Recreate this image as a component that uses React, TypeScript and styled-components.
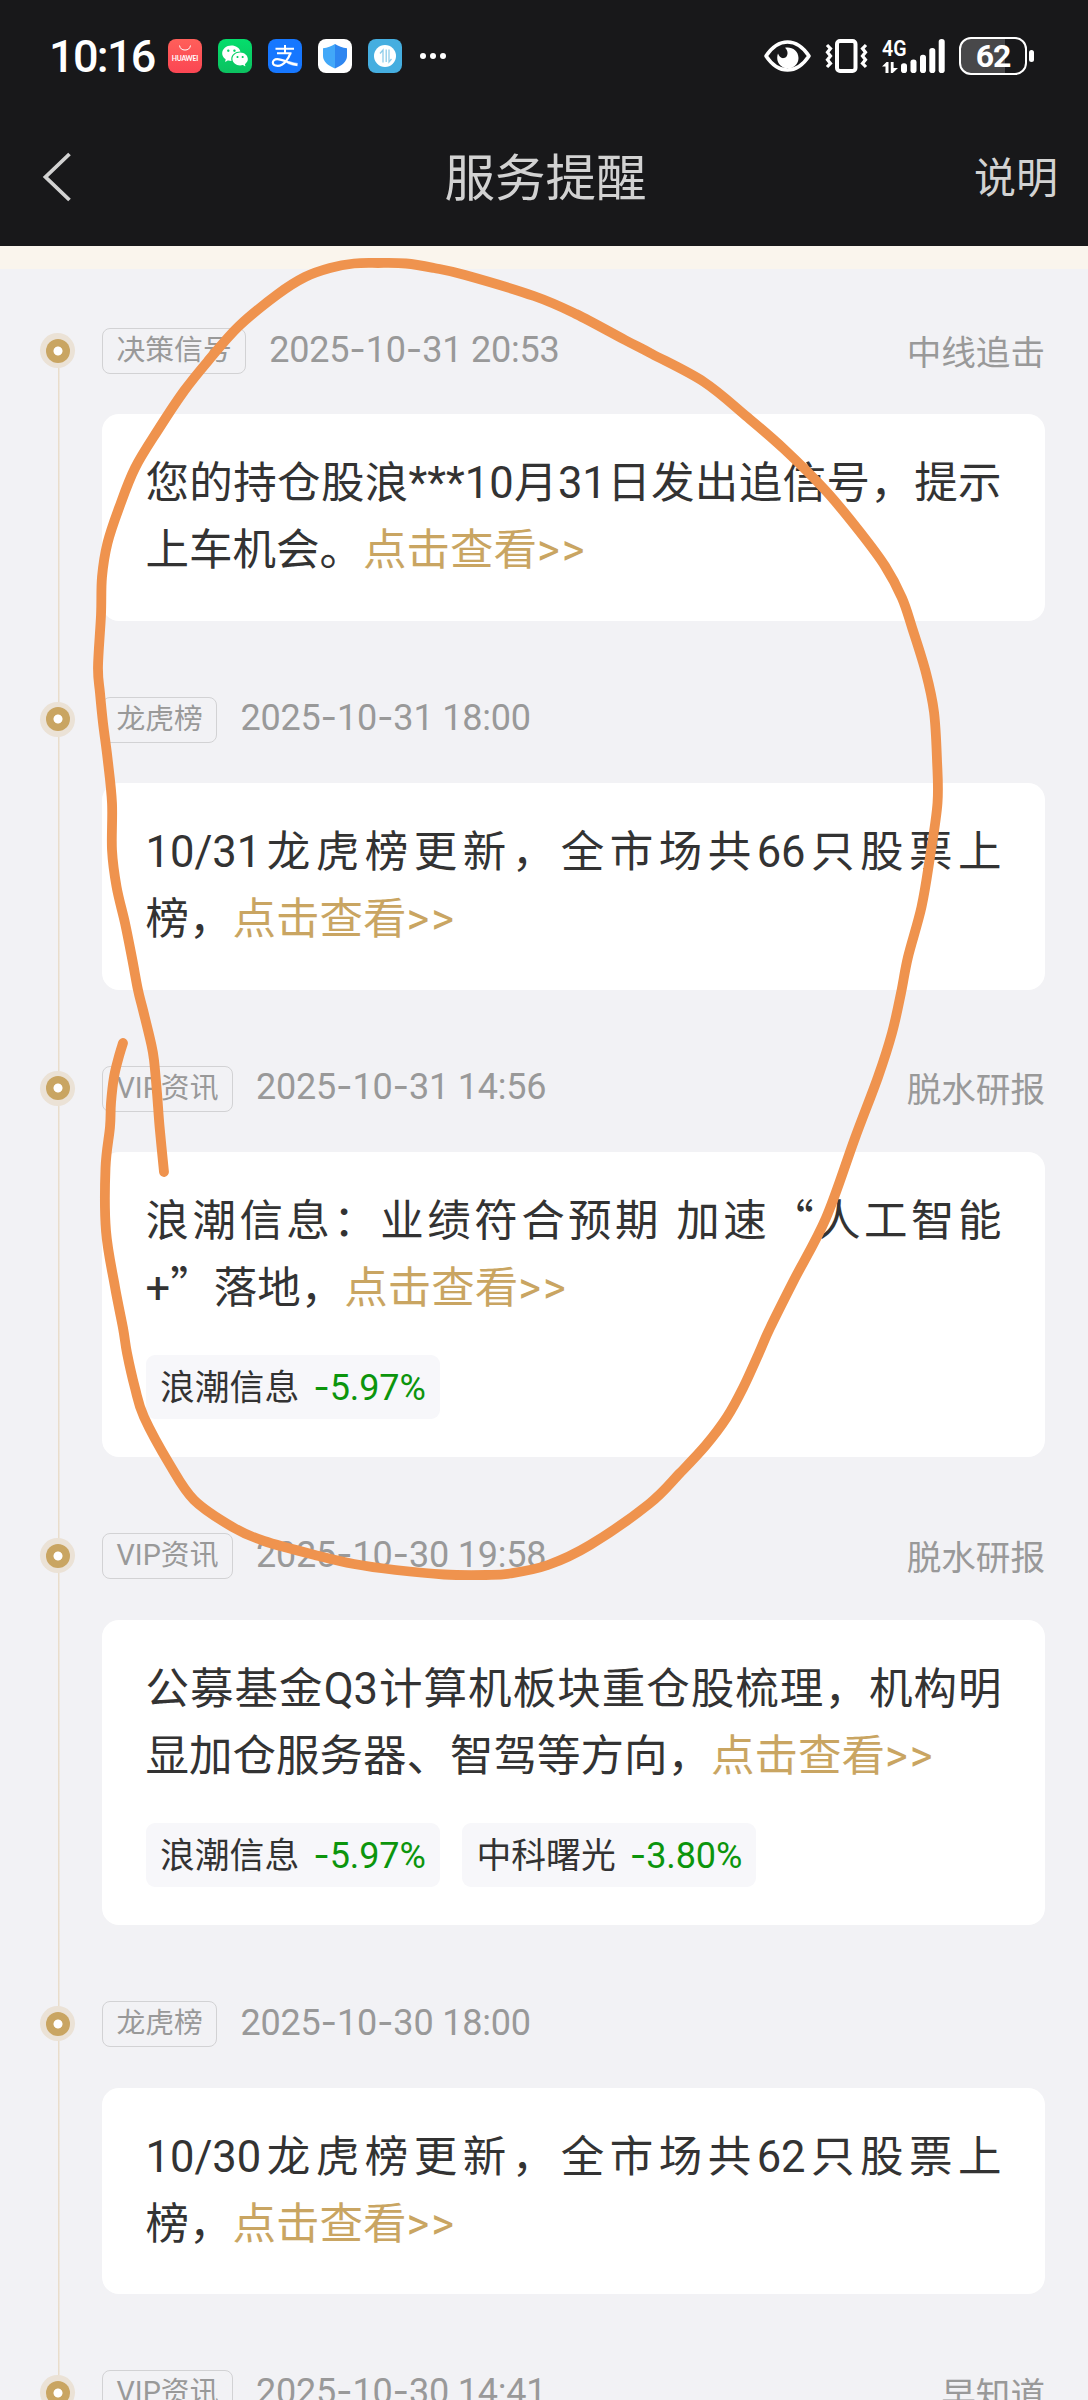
import React from "react";
import styled, { createGlobalStyle } from "styled-components";
import { RiWechatFill } from "react-icons/ri";

const LATIN = `Roboto, "Noto Sans CJK SC", sans-serif`;
const CJK = `"Noto Sans CJK SC", sans-serif`;

const GlobalStyle = createGlobalStyle`
  html, body { margin: 0; padding: 0; background: #f2f2f5; }
  *, *::before, *::after { box-sizing: border-box; }
`;

const Screen = styled.div`
  position: relative;
  width: 1088px;
  height: 2400px;
  overflow: hidden;
  background: #f2f2f5;
  font-family: ${LATIN};
  text-spacing-trim: space-all;
  text-autospace: no-autospace;
`;

const Top = styled.header`
  height: 246px;
  background: #18181a;
  color: #fff;
`;

const StatusBar = styled.div`
  display: flex;
  align-items: center;
  height: 112px;
  padding: 0 54px 0 49px;
`;

const Clock = styled.div`
  width: 119px;
  font-size: 45px;
  font-weight: 500;
  line-height: 52px;
  letter-spacing: -1.7px;
  white-space: nowrap;
  padding-top: 2px;
`;

const Apps = styled.div`
  display: flex;
  align-items: center;
  gap: 16px;
`;

const AppTile = styled.div<{ $bg: string }>`
  display: flex;
  align-items: center;
  justify-content: center;
  width: 34px;
  height: 34px;
  border-radius: 8px;
  background: ${(p) => p.$bg};
  color: #fff;
`;

const MoreDots = styled.div`
  display: flex;
  gap: 4px;
  margin-left: 18px;

  i {
    width: 6px;
    height: 6px;
    border-radius: 50%;
    background: #fff;
  }
`;

const Indicators = styled.div`
  display: flex;
  align-items: center;
  gap: 14px;
  margin-left: auto;

  svg {
    overflow: visible;
  }
`;

const Battery = styled.div`
  display: flex;
  align-items: center;
  gap: 2px;
`;

const BatteryBody = styled.div<{ $level: number }>`
  display: flex;
  align-items: center;
  justify-content: center;
  width: 68px;
  height: 38px;
  border: 2.5px solid #fff;
  border-radius: 12px;
  background: linear-gradient(90deg, #48484a ${(p) => p.$level + 6}%, transparent 0);
  font-size: 32px;
  font-weight: 700;
  line-height: 34px;
  letter-spacing: -1px;
`;

const BatteryTip = styled.div`
  width: 5px;
  height: 12px;
  border-radius: 3px;
  background: #fff;
`;

const NavBar = styled.div`
  display: grid;
  grid-template-columns: 1fr auto 1fr;
  align-items: center;
  height: 130px;
  padding: 0 30px 0 42px;
  color: #d2d2d2;
`;

const Title = styled.h1`
  margin: 0 9px 6px 0;
  font: 400 50.5px/74px ${CJK};
`;

const Explain = styled.div`
  justify-self: end;
  margin-bottom: 4px;
  font: 400 42px/62px ${CJK};
`;

const Notice = styled.div`
  height: 23px;
  background: #faf5ed;
`;

const Timeline = styled.main`
  padding: 59px 43px 0 40px;
`;

const Entry = styled.section`
  display: grid;
  grid-template-columns: 36px 1fr;
  column-gap: 26px;
`;

const Rail = styled.div`
  display: flex;
  flex-direction: column;
  align-items: center;
  background: linear-gradient(#e9ddcb, #e9ddcb) 18px 0 / 1.5px 100% no-repeat;
`;

const RailHead = styled.div<{ $first?: boolean }>`
  display: flex;
  align-items: center;
  height: 46px;
  width: 36px;
  background: ${(p) => (p.$first ? "linear-gradient(#f2f2f5 50%, transparent 0)" : "none")};
`;

const Dot = styled.div`
  display: flex;
  align-items: center;
  justify-content: center;
  width: 35px;
  height: 35px;
  margin-top: -1px;
  border-radius: 50%;
  background: #ebe2d6;

  &::after {
    content: "";
    width: 24px;
    height: 24px;
    border-radius: 50%;
    background: radial-gradient(circle, #fff 4.1px, #c9a562 4.9px);
  }
`;

const Content = styled.div`
  padding-bottom: 76px;
`;

const Meta = styled.div`
  display: flex;
  align-items: center;
  height: 46px;
  margin-bottom: 40.4px;
  color: #999;
`;

const Tag = styled.span`
  height: 46px;
  padding: 0 13.5px;
  border: 1px solid #d2d2d4;
  border-radius: 8px;
  font-size: 28.8px;
  line-height: 43px;
  white-space: nowrap;
`;

const Stamp = styled.time`
  margin-left: 23px;
  font-size: 36px;
  line-height: 42px;
  letter-spacing: -0.2px;
  margin-top: -3px;
  white-space: nowrap;
`;

const Source = styled.span`
  margin-left: auto;
  margin-top: 3px;
  font-size: 34.6px;
  line-height: 46px;
`;

const Card = styled.article`
  padding: 37px 43.5px 38.6px;
  border-radius: 17px;
  background: #fff;
`;

const Body = styled.div`
  height: 130.8px;
`;

const Line = styled.div<{ $full?: boolean }>`
  height: 66.9px;
  font-size: 43.5px;
  line-height: 66.9px;
  color: #333;
  white-space: nowrap;
  text-align-last: ${(p) => (p.$full ? "justify" : "left")};
`;

const More = styled.a`
  color: #c9a562;
`;

const Arrows = styled.span`
  letter-spacing: 2px;
`;

const Mark = styled.span`
  font-family: ${CJK};
  line-height: 1;
`;

const Dash = styled.span`
  font-family: Inter, sans-serif;
  line-height: 1;
`;

const Chips = styled.div`
  display: flex;
  gap: 22.5px;
  margin-top: 35.4px;
`;

const Chip = styled.div`
  display: flex;
  align-items: center;
  gap: 14px;
  width: 294px;
  height: 63.7px;
  padding: 2px 14.5px 0;
  border-radius: 9px;
  background: #f7f7fa;
  font-size: 34.8px;
  line-height: 48px;
  color: #333;
  white-space: nowrap;
`;

const Change = styled.span`
  color: #0c950c;
  font-size: 36px;
  letter-spacing: -0.1px;
`;

const Ink = styled.svg`
  position: absolute;
  inset: 0;
  pointer-events: none;
`;

type Stock = { name: string; change: string };
type Reminder = {
  tag: string;
  time: string;
  source?: string;
  first?: string;
  second?: string;
  stocks?: Stock[];
};

const reminders: Reminder[] = [
  {
    tag: "决策信号",
    time: "2025-10-31 20:53",
    source: "中线追击",
    first: "您的持仓股浪***10月31日发出追信号，提示",
    second: "上车机会。",
  },
  {
    tag: "龙虎榜",
    time: "2025-10-31 18:00",
    first: "10/31龙虎榜更新，全市场共66只股票上",
    second: "榜，",
  },
  {
    tag: "VIP资讯",
    time: "2025-10-31 14:56",
    source: "脱水研报",
    first: "浪潮信息：业绩符合预期 加速“人工智能",
    second: "+”落地，",
    stocks: [{ name: "浪潮信息", change: "-5.97%" }],
  },
  {
    tag: "VIP资讯",
    time: "2025-10-30 19:58",
    source: "脱水研报",
    first: "公募基金Q3计算机板块重仓股梳理，机构明",
    second: "显加仓服务器、智驾等方向，",
    stocks: [
      { name: "浪潮信息", change: "-5.97%" },
      { name: "中科曙光", change: "-3.80%" },
    ],
  },
  {
    tag: "龙虎榜",
    time: "2025-10-30 18:00",
    first: "10/30龙虎榜更新，全市场共62只股票上",
    second: "榜，",
  },
  { tag: "VIP资讯", time: "2025-10-30 14:41", source: "早知道" },
];

// Curly quotes take their full-width form, hyphens the wider dash of Inter.
function Mixed({ text }: { text: string }) {
  return (
    <>
      {text.split(/([“”-])/).map((part, i) => {
        if (part === "-") return <Dash key={i}>-</Dash>;
        if (part === "“" || part === "”") return <Mark key={i}>{part}</Mark>;
        return part;
      })}
    </>
  );
}

function Row({ item, first }: { item: Reminder; first: boolean }) {
  return (
    <Entry>
      <Rail>
        <RailHead $first={first}>
          <Dot />
        </RailHead>
      </Rail>
      <Content>
        <Meta>
          <Tag>{item.tag}</Tag>
          <Stamp>
            <Mixed text={item.time} />
          </Stamp>
          {item.source && <Source>{item.source}</Source>}
        </Meta>
        {item.first && (
          <Card>
            <Body>
              <Line $full>
                <Mixed text={item.first} />
              </Line>
              <Line>
                <Mixed text={item.second ?? ""} />
                <More>
                  点击查看<Arrows>&gt;&gt;</Arrows>
                </More>
              </Line>
            </Body>
            {item.stocks && (
              <Chips>
                {item.stocks.map((s) => (
                  <Chip key={s.name}>
                    {s.name}
                    <Change>
                      <Mixed text={s.change} />
                    </Change>
                  </Chip>
                ))}
              </Chips>
            )}
          </Card>
        )}
      </Content>
    </Entry>
  );
}

const stroke: [number, number][] = [
  [164, 1172], [159.6, 1127], [157, 1093], [154, 1060], [151, 1043], [143, 1010], [138, 990],
  [132, 958], [125, 923], [116.6, 887], [112, 850], [112, 803], [107.5, 758], [103, 723],
  [100, 693], [98, 667], [101, 615], [102, 577], [107.5, 543], [119, 508], [135, 468],
  [158, 430], [184, 391], [208, 361], [239, 326], [278, 294], [305, 277], [330, 268],
  [354, 263.5], [378, 263], [406, 263.5], [434, 268], [465, 275], [534, 296], [576, 314],
  [625, 340], [652, 354], [704, 382], [746, 416], [784, 449], [826, 491], [860, 532],
  [885, 566], [902, 598], [912.5, 629], [926, 673], [934, 712], [937, 760], [937.5, 803],
  [930, 857], [921.5, 907], [908, 957], [901, 993], [892, 1033], [878, 1077], [855, 1138],
  [826, 1218], [794, 1280], [770, 1328], [759, 1353], [743, 1388], [727, 1417],
  [706, 1445], [680, 1473], [649, 1504], [590, 1545], [548, 1565], [510, 1573.5],
  [486, 1575], [444, 1574.5], [395.5, 1570], [354, 1564], [319, 1556], [264, 1541],
  [232.5, 1527], [194, 1500], [170, 1465], [144, 1417], [135, 1388], [127, 1353],
  [123, 1328], [115, 1287], [106, 1231], [105.5, 1168], [110, 1127], [111, 1103],
  [114, 1077], [118.5, 1058], [123, 1043],
];

// Catmull-Rom spline through the pen samples.
function smooth(pts: [number, number][]) {
  let d = `M${pts[0][0]} ${pts[0][1]}`;
  for (let i = 0; i < pts.length - 1; i++) {
    const a = pts[Math.max(i - 1, 0)];
    const b = pts[i];
    const c = pts[i + 1];
    const e = pts[Math.min(i + 2, pts.length - 1)];
    d += `C${b[0] + (c[0] - a[0]) / 6} ${b[1] + (c[1] - a[1]) / 6} ${c[0] - (e[0] - b[0]) / 6} ${
      c[1] - (e[1] - b[1]) / 6
    } ${c[0]} ${c[1]}`;
  }
  return d;
}

const bars = [
  [19, 24.2],
  [28.5, 20.5],
  [38, 15.8],
  [47.3, 9],
  [56.7, 0],
];

export default function App() {
  return (
    <Screen lang="zh-CN">
      <GlobalStyle />
      <Top>
        <StatusBar>
          <Clock>10:16</Clock>
          <Apps>
            <AppTile $bg="linear-gradient(#ff5f5a, #fb4653)">
              <svg width="34" height="34" viewBox="0 0 34 34">
                <path d="M11.5 6.5a5.6 5.6 0 0 0 11 0" fill="none" stroke="#fff" strokeWidth="1" />
                <text x="3.8" y="22" textLength="26.4" fontSize="6.8" fontWeight="700" fill="#fff" fontFamily="Lato, sans-serif">
                  HUAWEI
                </text>
              </svg>
            </AppTile>
            <AppTile $bg="linear-gradient(#04de6c, #0cc160)">
              <RiWechatFill size={28} />
            </AppTile>
            <AppTile $bg="#1677ff">
              <svg width="34" height="34" viewBox="0 0 34 34" fill="none" stroke="#fff">
                <path d="M17 6v8M7.5 9.8h18.5M9 14.3h14.5" strokeWidth="2" />
                <path d="M22.3 14.3C20.5 19.5 16 26.8 9.8 26.8c-6.6 0-6.4-6.6-.6-6.6 6.4 0 12.5 5 20 5.6" strokeWidth="2.2" />
                <path d="M20 23.2c3 1.3 6 2.1 9.7 2.4" strokeWidth="3.4" opacity=".6" />
              </svg>
            </AppTile>
            <AppTile $bg="#fff">
              <svg width="34" height="34" viewBox="0 0 34 34">
                <path d="M17 5c3.500 2.400 7.500 3.700 12 4.200v7.800c0 5.500-4.800 9.500-12 12.500z" fill="#2e86f0" />
                <path d="M17 5c-3.500 2.400-7.500 3.700-12 4.200v7.800c0 5.500 4.800 9.500 12 12.500z" fill="#42a8f8" />
              </svg>
            </AppTile>
            <AppTile $bg="#45aee0">
              <svg width="34" height="34" viewBox="0 0 34 34">
                <circle cx="17" cy="17" r="11" fill="#fff" />
                <path d="M12 14.500l3-3.500v12.500M18.200 10.500V23M21 10.500V23l2.500-3" fill="none" stroke="#8fcdea" strokeWidth="1.3" />
              </svg>
            </AppTile>
          </Apps>
          <MoreDots>
            <i />
            <i />
            <i />
          </MoreDots>
          <Indicators>
            <svg width="47" height="34" viewBox="0 0 47 34">
              <path d="M2 17C8 8 15 3 23.500 3S39 8 45 17c-6 9-13 14-21.500 14S8 26 2 17z" fill="none" stroke="#fff" strokeWidth="3.6" strokeLinejoin="round" />
              <path d="M21 8.800c6-1.500 13.500 2.400 13.500 10.200 0 6-5 10.500-10.500 10.500S13.200 25 13.200 19c0-1.800.3-3.200.8-4.500 1 3 3.300 5.300 6 4.600 4.500-1.100 4.600-7.300 1-10.300z" fill="#fff" />
            </svg>
            <svg width="43" height="34" viewBox="0 0 43 34">
              <rect x="12" y="2" width="18.5" height="30" rx="3" fill="none" stroke="#fff" strokeWidth="4" />
              <path d="M2 6l3.500 3.600L2.500 13.300 5.500 17l-3 3.700 3 3.700L2 28M41 6l-3.500 3.600 3 3.700-3 3.700 3 3.700-3 3.700L41 28" fill="none" stroke="#fff" strokeWidth="3.2" />
            </svg>
            <svg width="63" height="34" viewBox="0 0 63 34">
              <text x="0" y="16.8" textLength="24.5" lengthAdjust="spacingAndGlyphs" fontSize="22.5" fontWeight="600" fill="#fff" fontFamily="Roboto, sans-serif">
                4G
              </text>
              <path d="M0 27.500L4.500 23H6.500V34H3.500V27.500zM8.800 23h2.800v6H16l-5.200 5H8.800z" fill="#fff" />
              {bars.map(([x, y]) => (
                <rect key={x} x={x} y={y} width="6" height={34 - y} rx="2.8" fill="#fff" />
              ))}
            </svg>
            <Battery>
              <BatteryBody $level={62}>62</BatteryBody>
              <BatteryTip />
            </Battery>
          </Indicators>
        </StatusBar>
        <NavBar>
          <svg width="30" height="52" viewBox="0 0 30 52">
            <path d="M27.500 3L3.500 26l24 23" fill="none" stroke="#d2d2d2" strokeWidth="3.8" />
          </svg>
          <Title>服务提醒</Title>
          <Explain>说明</Explain>
        </NavBar>
      </Top>
      <Notice />
      <Timeline>
        {reminders.map((r, i) => (
          <Row key={r.time} item={r} first={i === 0} />
        ))}
      </Timeline>
      <Ink width="1088" height="2400" viewBox="0 0 1088 2400">
        <path d={smooth(stroke)} fill="none" stroke="#ef934e" strokeWidth="9.8" strokeLinecap="round" strokeLinejoin="round" />
      </Ink>
    </Screen>
  );
}
